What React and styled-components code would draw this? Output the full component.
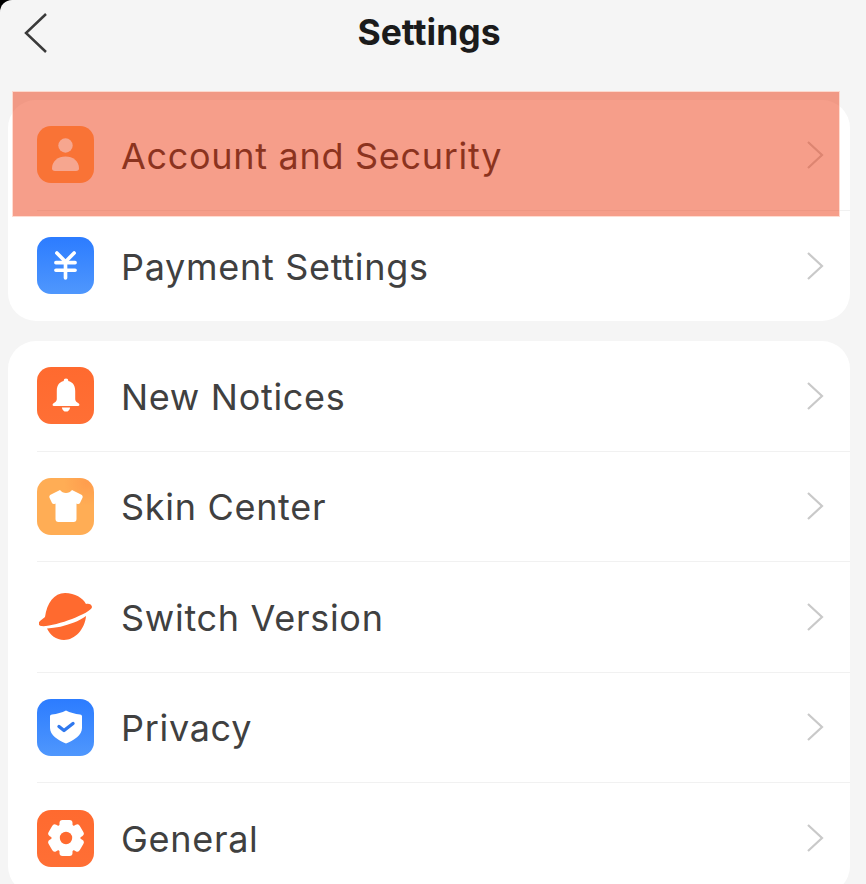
import React from "react";
import styled, { createGlobalStyle } from "styled-components";

const GlobalStyle = createGlobalStyle`
  html, body {
    margin: 0;
    padding: 0;
    background: #000;
  }
`;

const Screen = styled.div`
  position: relative;
  width: 866px;
  height: 884px;
  overflow: hidden;
  background: #f5f5f5;
  border-top-left-radius: 12px;
  font-family: "Inter", "Noto Sans CJK SC", sans-serif;
  box-sizing: border-box;
  padding: 0 16px 0 8px;
`;

const Header = styled.div`
  height: 100px;
  display: flex;
  align-items: flex-start;
  justify-content: center;
  position: relative;
`;

const BackButton = styled.svg`
  position: absolute;
  left: 15px;
  top: 12px;
`;

const Title = styled.div`
  font-size: 35.5px;
  font-weight: 700;
  color: #1b1b1b;
  line-height: 65px;
`;

const Card = styled.div`
  background: #fff;
  border-radius: 28px;
  margin-bottom: 20px;
  padding-left: 29px;
`;

const Row = styled.div`
  height: 110.5px;
  box-sizing: border-box;
  display: flex;
  align-items: center;
  padding-right: 26px;
  border-bottom: ${(props) => (props.last ? "none" : "1px solid #f1f1f1")};
`;

const IconBox = styled.div`
  position: relative;
  z-index: ${(props) => (props.raised ? 1 : "auto")};
  width: 57px;
  height: 57px;
  flex: none;
  border-radius: 14px;
  background: ${(props) => props.bg};
  display: flex;
  align-items: center;
  justify-content: center;
  margin-right: 27px;
`;

const Label = styled.div`
  flex: 1;
  font-size: 36px;
  font-weight: 400;
  letter-spacing: 0.7px;
  color: ${(props) => (props.dim ? "#1c1c1c" : "#404040")};
  line-height: 46px;
  padding-top: 2px;
`;

const Chevron = styled.svg`
  flex: none;
`;

const Highlight = styled.div`
  position: absolute;
  left: 12px;
  top: 91px;
  width: 828px;
  height: 126px;
  box-sizing: border-box;
  border: 1px solid rgba(255, 205, 190, 0.7);
  background: rgba(238, 72, 34, 0.53);
  background-clip: padding-box;
`;

const orange = "linear-gradient(180deg, #ff6a2f 0%, #ff6f35 100%)";
const blue = "linear-gradient(180deg, #2c7cff 0%, #4f97fd 100%)";
const amber =
  "radial-gradient(circle at 88% 8%, rgba(255, 120, 60, 0.3), transparent 32%), #ffad55";

const PersonIcon = () => (
  <svg width="27" height="33" viewBox="0 0 27 33" fill="#f6a68f">
    <circle cx="13.500" cy="7.500" r="7.200" />
    <path d="M3 33c-2 0-3-1-3-2.500C0 23 6 18.500 13.500 18.500S27 23 27 30.500c0 1.500-1 2.500-3 2.500z" />
  </svg>
);

const YenIcon = () => (
  <svg width="23" height="29" viewBox="0 0 24 30" fill="none" stroke="#fff" strokeWidth="3.800">
    <path d="M3 2l9 9 9-9" strokeLinecap="round" strokeLinejoin="round" />
    <path d="M2 12h20M2 20h20M12 11v17" strokeLinecap="round" />
  </svg>
);

const BellIcon = () => (
  <svg width="28" height="35" viewBox="0 0 30 38" fill="#fff">
    <circle cx="15" cy="3" r="2.500" />
    <path d="M15 3c-6.500 0-10 4.500-10 11v9c0 2-2 3.500-3.500 4.500-1.500 1-1.500 3 .5 3h26c2 0 2-2 .5-3-1.500-1-3.500-2.500-3.500-4.500v-9c0-6.500-3.500-11-10-11z" />
    <path d="M10.500 32h9c-.5 3-2.200 4.500-4.500 4.500s-4-1.500-4.500-4.500z" />
  </svg>
);

const ShirtIcon = () => (
  <svg width="34" height="34" viewBox="0 0 34 34" fill="#fff">
    <path d="M11 1c1.500 2 3.500 3 6 3s4.500-1 6-3l9 4.500c1.500.8 2 2 1.500 3.200L31 14c-.5 1-1.500 1.300-2.500 1l-1-.5V30c0 2-1 3-3 3h-15c-2 0-3-1-3-3V14.500l-1 .5c-1 .3-2 0-2.500-1L.5 8.700C0 7.500.5 6.300 2 5.500z" />
  </svg>
);

const PlanetIcon = () => (
  <svg width="53" height="47" viewBox="0 0 53 47" fill="#ff6a2f">
    <path d="M1 28l5-4C8 10 15 0 26 0c10 0 18 5 21 11 2-1 6 0 6 3 0 3-10 8-20 12-11 4-25 8-31 7-3-1-3-3-1-5z" />
    <path d="M8 35.500c9-.5 18-2.500 27-6 4-1.500 9-4.500 12-6.500-1 13-11 24-22 24-8 0-14-5-17-11.500z" />
  </svg>
);

const ShieldIcon = () => (
  <svg width="32" height="34" viewBox="0 0 32 34">
    <path
      d="M16 .5c4 2 9 3.500 14 4 1.200.1 2 .8 2 2V18c0 7-8 12.500-16 15.500C8 30.500 0 25 0 18V6.500c0-1.200.8-1.900 2-2 5-.5 10-2 14-4z"
      fill="#fff"
    />
    <path
      d="M9 16.500l5 4 9-7"
      fill="none"
      stroke="#2f78ee"
      strokeWidth="3.400"
      strokeLinecap="round"
      strokeLinejoin="round"
    />
  </svg>
);

const GearIcon = () => (
  <svg width="36" height="38" viewBox="-18 -19 36 38">
    <circle r="14.500" fill="#fff" />
    {[0, 60, 120, 180, 240, 300].map((angle) => (
      <rect
        key={angle}
        x="-6.500"
        y="-18"
        width="13"
        height="12"
        rx="3"
        fill="#fff"
        transform={`rotate(${angle})`}
      />
    ))}
    <circle r="6.200" fill="#ff6a2f" />
  </svg>
);

const groups = [
  [
    { label: "Account and Security", bg: "#f97336", icon: <PersonIcon />, highlighted: true },
    { label: "Payment Settings", bg: blue, icon: <YenIcon /> },
  ],
  [
    { label: "New Notices", bg: orange, icon: <BellIcon /> },
    { label: "Skin Center", bg: amber, icon: <ShirtIcon /> },
    { label: "Switch Version", bg: "transparent", icon: <PlanetIcon /> },
    { label: "Privacy", bg: blue, icon: <ShieldIcon /> },
    { label: "General", bg: orange, icon: <GearIcon /> },
  ],
];

const App = () => {
  return (
    <Screen>
      <GlobalStyle />
      <Header>
        <BackButton width="26" height="42" viewBox="0 0 26 42" fill="none">
          <path d="M23 2L3 21l20 19" stroke="#3a3a3a" strokeWidth="2.500" />
        </BackButton>
        <Title>Settings</Title>
      </Header>
      {groups.map((rows, i) => (
        <Card key={i}>
          {rows.map((row, j) => (
            <Row key={row.label} last={j === rows.length - 1}>
              <IconBox bg={row.bg} raised={row.highlighted}>
                {row.icon}
              </IconBox>
              <Label dim={row.highlighted}>{row.label}</Label>
              <Chevron width="18" height="30" viewBox="0 0 18 30" fill="none">
                <path d="M2 2l14 13L2 28" stroke="#c9c9c9" strokeWidth="2.200" />
              </Chevron>
            </Row>
          ))}
        </Card>
      ))}
      <Highlight />
    </Screen>
  );
};

export default App;
